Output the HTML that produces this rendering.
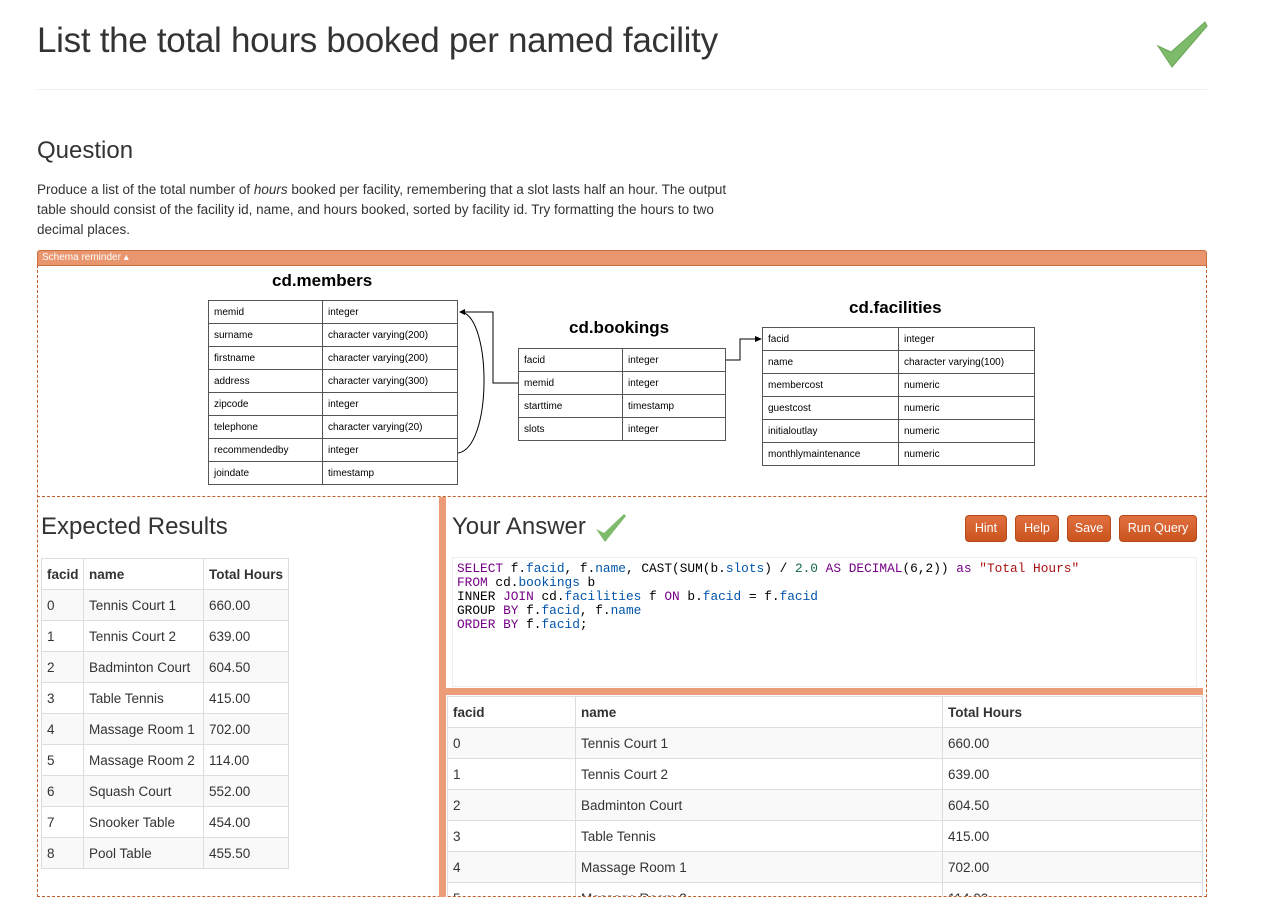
<!DOCTYPE html>
<html><head><meta charset="utf-8"><style>
*{box-sizing:border-box;margin:0;padding:0}
body{width:1268px;height:903px;overflow:hidden;background:#fff;font-family:"Liberation Sans",sans-serif;color:#333;position:relative}
.a{position:absolute}
h1{position:absolute;left:37px;top:21px;font-size:35px;font-weight:normal;color:#333;letter-spacing:-0.3px}
.q{left:37px;top:137px;font-size:24px}
p.t{position:absolute;left:37px;top:180px;width:900px;font-size:13.5px;line-height:20px;color:#333}
.dt{border-collapse:collapse;font-size:10px;color:#000;position:absolute;background:#fff}
.dt td{border:1px solid #555;height:23px;padding-left:5px}
.st{font-weight:bold;font-size:17px;color:#000;position:absolute}
.rt{position:absolute;border-collapse:collapse;font-size:13.5px;color:#333}
.rt td{border:1px solid #ddd;height:31px;padding-left:5px}
.rt tr:nth-child(even) td{background:#f9f9f9}
.rt tr:first-child td{font-weight:bold}
.btn{position:absolute;top:515px;height:27px;background:linear-gradient(#e2703f,#c9531e);border:1px solid #b54a1a;border-radius:4px;color:#fff;font-size:12.5px;text-align:center;line-height:25px}
pre{font-family:"Liberation Mono",monospace;font-size:12.8px;line-height:14px;color:#000}
.k{color:#708}.v{color:#05a}.n{color:#164}.s{color:#a11}
</style></head><body>
<h1>List the total hours booked per named facility</h1>
<svg class="a" style="left:1150px;top:15px" width="65" height="60"><polygon points="8,31 21,37 55,7 57,11 22,52" fill="#7dbb6a" stroke="#6aa858" stroke-width="1"/></svg>
<div class="a" style="left:37px;top:89px;width:1170px;border-top:1px solid #eee"></div>
<div class="a q">Question</div>
<p class="t">Produce a list of the total number of <i>hours</i> booked per facility, remembering that a slot lasts half an hour. The output<br>table should consist of the facility id, name, and hours booked, sorted by facility id. Try formatting the hours to two<br>decimal places.</p>
<div class="a" style="left:37px;top:250px;width:1170px;height:16px;background:#e9956e;border:1px solid #c8713f;border-radius:3px 3px 0 0;color:#fff;font-size:10px;line-height:14px;padding-left:4px">Schema reminder ▴</div>
<div class="a" style="left:37px;top:265px;width:1170px;height:632px;border:1px dashed #c0602c;border-top:none"></div>
<div class="a" style="left:37px;top:496px;width:1170px;border-top:1px dashed #c0602c"></div>
<div class="st" style="left:272px;top:271px">cd.members</div>
<table class="dt" style="left:208px;top:300px;width:250px"><colgroup><col style="width:114px"><col></colgroup>
<tr><td>memid</td><td>integer</td></tr><tr><td>surname</td><td>character varying(200)</td></tr><tr><td>firstname</td><td>character varying(200)</td></tr><tr><td>address</td><td>character varying(300)</td></tr><tr><td>zipcode</td><td>integer</td></tr><tr><td>telephone</td><td>character varying(20)</td></tr><tr><td>recommendedby</td><td>integer</td></tr><tr><td>joindate</td><td>timestamp</td></tr></table>
<div class="st" style="left:569px;top:318px">cd.bookings</div>
<table class="dt" style="left:518px;top:348px;width:208px"><colgroup><col style="width:104px"><col></colgroup>
<tr><td>facid</td><td>integer</td></tr><tr><td>memid</td><td>integer</td></tr><tr><td>starttime</td><td>timestamp</td></tr><tr><td>slots</td><td>integer</td></tr></table>
<div class="st" style="left:849px;top:298px">cd.facilities</div>
<table class="dt" style="left:762px;top:327px;width:273px"><colgroup><col style="width:136px"><col></colgroup>
<tr><td>facid</td><td>integer</td></tr><tr><td>name</td><td>character varying(100)</td></tr><tr><td>membercost</td><td>numeric</td></tr><tr><td>guestcost</td><td>numeric</td></tr><tr><td>initialoutlay</td><td>numeric</td></tr><tr><td>monthlymaintenance</td><td>numeric</td></tr></table>
<svg class="a" style="left:0;top:0" width="1268" height="500">
<path d="M518,383 H493 V312 H462" fill="none" stroke="#000" stroke-width="1"/><polygon points="459,312 465,309 465,315"/>
<path d="M458,453 C492,448 492,320 462,312" fill="none" stroke="#000" stroke-width="1"/>
<path d="M726,360 H740 V339 H758" fill="none" stroke="#000" stroke-width="1"/><polygon points="762,339 755,336 755,342"/>
</svg>
<div class="a" style="left:439px;top:497px;width:7px;height:400px;background:#ec9c78"></div>
<div class="a" style="left:41px;top:513px;font-size:24px">Expected Results</div>
<table class="rt" style="left:41px;top:558px;width:248px"><colgroup><col style="width:42px"><col style="width:120px"><col></colgroup>
<tr><td>facid</td><td>name</td><td>Total Hours</td></tr>
<tr><td>0</td><td>Tennis Court 1</td><td>660.00</td></tr><tr><td>1</td><td>Tennis Court 2</td><td>639.00</td></tr><tr><td>2</td><td>Badminton Court</td><td>604.50</td></tr><tr><td>3</td><td>Table Tennis</td><td>415.00</td></tr><tr><td>4</td><td>Massage Room 1</td><td>702.00</td></tr><tr><td>5</td><td>Massage Room 2</td><td>114.00</td></tr><tr><td>6</td><td>Squash Court</td><td>552.00</td></tr><tr><td>7</td><td>Snooker Table</td><td>454.00</td></tr><tr><td>8</td><td>Pool Table</td><td>455.50</td></tr></table>
<div class="a" style="left:452px;top:513px;font-size:24px">Your Answer</div>
<svg class="a" style="left:594px;top:512px" width="34" height="32"><polygon points="2,17 10,21 30,2 32,4 11,30" fill="#7dbb6a"/></svg>
<div class="btn" style="left:965px;width:42px">Hint</div>
<div class="btn" style="left:1015px;width:44px">Help</div>
<div class="btn" style="left:1067px;width:44px">Save</div>
<div class="btn" style="left:1119px;width:78px">Run Query</div>
<div class="a" style="left:452px;top:557px;width:745px;height:130px;border:1px solid #eee;padding:4px 4px">
<pre><span class="k">SELECT</span> f.<span class="v">facid</span>, f.<span class="v">name</span>, CAST(SUM(b.<span class="v">slots</span>) / <span class="n">2.0</span> <span class="k">AS</span> <span class="k">DECIMAL</span>(6,2)) <span class="k">as</span> <span class="s">"Total Hours"</span>
<span class="k">FROM</span> cd.<span class="v">bookings</span> b
INNER <span class="k">JOIN</span> cd.<span class="v">facilities</span> f <span class="k">ON</span> b.<span class="v">facid</span> = f.<span class="v">facid</span>
GROUP <span class="k">BY</span> f.<span class="v">facid</span>, f.<span class="v">name</span>
<span class="k">ORDER</span> <span class="k">BY</span> f.<span class="v">facid</span>;</pre></div>
<div class="a" style="left:446px;top:688px;width:757px;height:7px;background:#ec9c78"></div>
<div class="a" style="left:447px;top:696px;width:756px;height:200px;overflow:hidden">
<table class="rt" style="left:0;top:0;width:756px"><colgroup><col style="width:128px"><col style="width:367px"><col></colgroup>
<tr><td>facid</td><td>name</td><td>Total Hours</td></tr>
<tr><td>0</td><td>Tennis Court 1</td><td>660.00</td></tr><tr><td>1</td><td>Tennis Court 2</td><td>639.00</td></tr><tr><td>2</td><td>Badminton Court</td><td>604.50</td></tr><tr><td>3</td><td>Table Tennis</td><td>415.00</td></tr><tr><td>4</td><td>Massage Room 1</td><td>702.00</td></tr><tr><td>5</td><td>Massage Room 2</td><td>114.00</td></tr></table></div>
</body></html>
